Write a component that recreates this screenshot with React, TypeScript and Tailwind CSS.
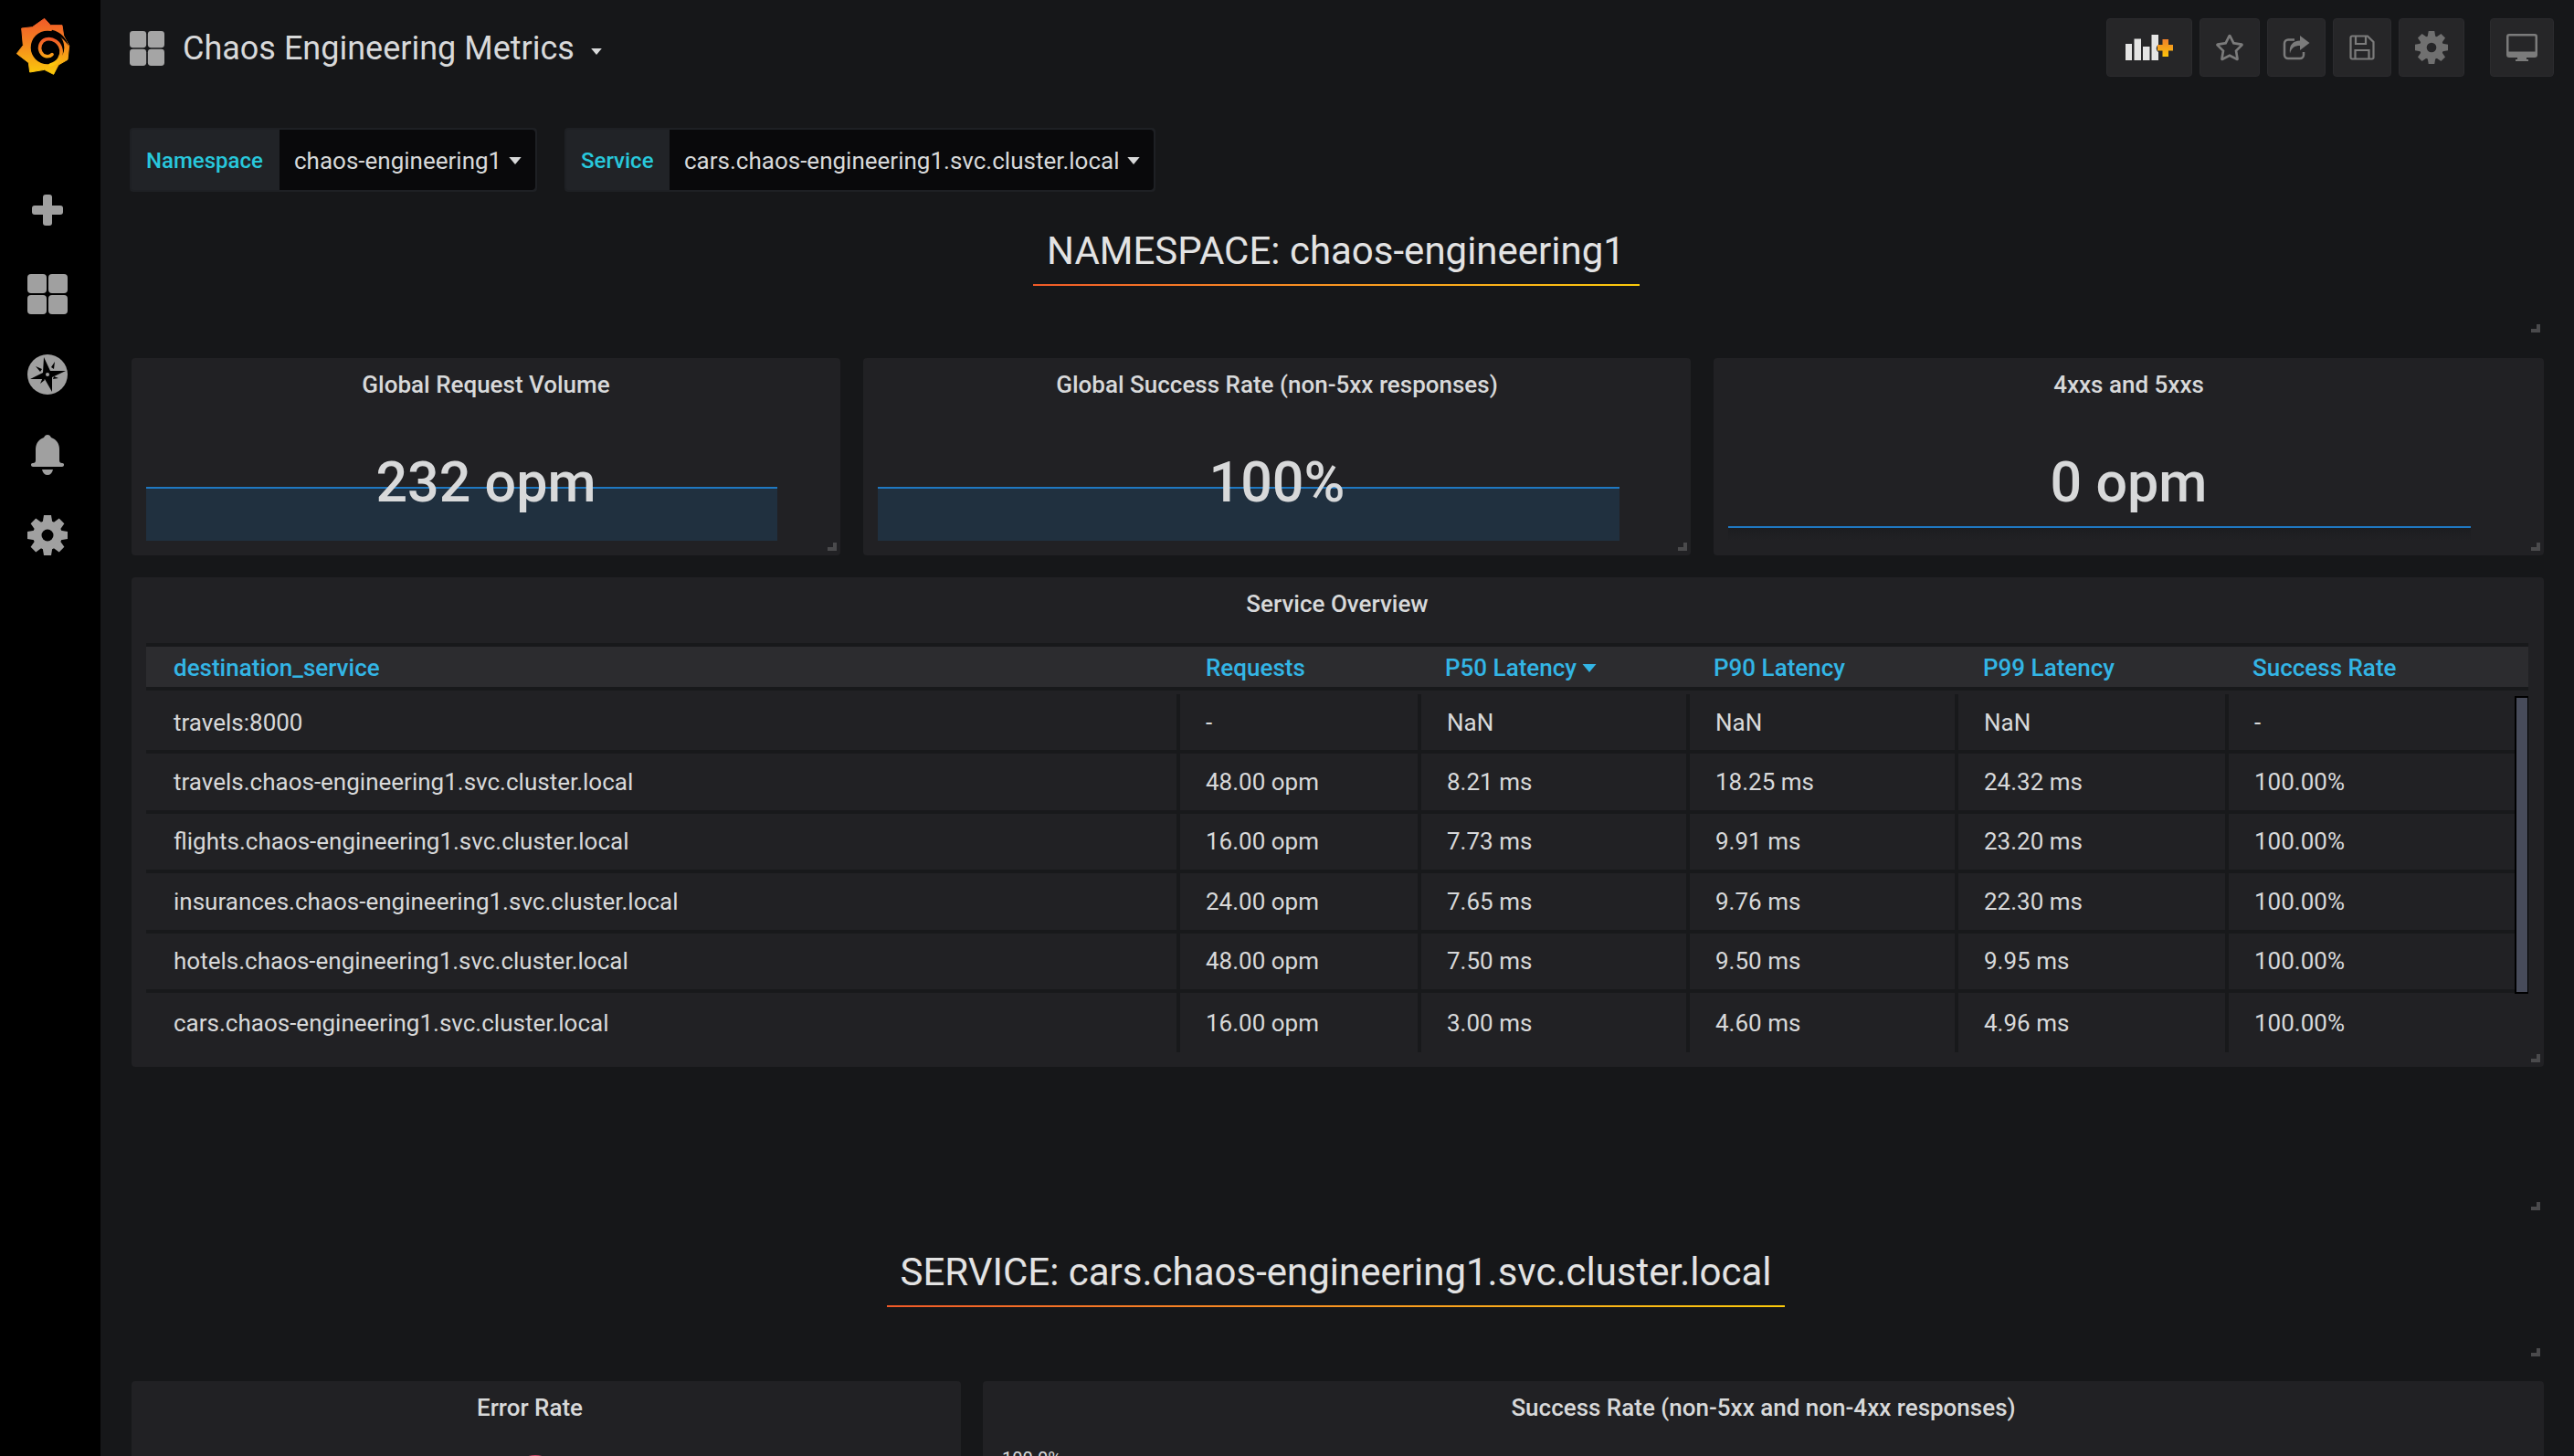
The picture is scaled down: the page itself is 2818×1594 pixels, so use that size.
import type { ReactNode } from 'react';
import { FaRegStar } from 'react-icons/fa';

const rows = [
  ['travels:8000', '-', 'NaN', 'NaN', 'NaN', '-'],
  ['travels.chaos-engineering1.svc.cluster.local', '48.00 opm', '8.21 ms', '18.25 ms', '24.32 ms', '100.00%'],
  ['flights.chaos-engineering1.svc.cluster.local', '16.00 opm', '7.73 ms', '9.91 ms', '23.20 ms', '100.00%'],
  ['insurances.chaos-engineering1.svc.cluster.local', '24.00 opm', '7.65 ms', '9.76 ms', '22.30 ms', '100.00%'],
  ['hotels.chaos-engineering1.svc.cluster.local', '48.00 opm', '7.50 ms', '9.50 ms', '9.95 ms', '100.00%'],
  ['cars.chaos-engineering1.svc.cluster.local', '16.00 opm', '3.00 ms', '4.60 ms', '4.96 ms', '100.00%'],
];

const tableCols = 'grid grid-cols-[1128px_264px_294px_294px_296px_332px]';

const Caret = ({ className }: { className: string }) => (
  <svg viewBox="0 0 10 6" className={className}>
    <path d="M0 0h10L5 6z" fill="currentColor" />
  </svg>
);

const Tiles = ({ className }: { className: string }) => (
  <svg viewBox="0 0 44 44" className={className} fill="currentColor">
    <rect x="0" y="0" width="21" height="21" rx="4" />
    <rect x="23" y="0" width="21" height="21" rx="4" />
    <rect x="0" y="23" width="21" height="21" rx="4" />
    <rect x="23" y="23" width="21" height="21" rx="4" />
  </svg>
);

const Gear = ({ className, hole }: { className: string; hole: string }) => (
  <svg viewBox="0 0 44 44" className={className} fill="currentColor">
    <circle cx="22" cy="22" r="16" />
    {[0, 45, 90, 135, 180, 225, 270, 315].map((a) => (
      <path key={a} d="M18 0h8l1.500 9h-11z" transform={`rotate(${a} 22 22)`} />
    ))}
    <circle cx="22" cy="22" r="6.500" fill={hole} />
  </svg>
);

const Logo = () => (
  <svg viewBox="50 56 180 192" className="w-[60px] h-[64px]">
    <defs>
      <linearGradient id="grafana" x1="0" y1="0" x2="0" y2="1">
        <stop offset="0" stopColor="#f05a28" />
        <stop offset="0.35" stopColor="#f47a22" />
        <stop offset="1" stopColor="#fbca0a" />
      </linearGradient>
    </defs>
    <path
      d="M145 60 L165 82 L203 82 L208 116 L226 150 L221 195 L191 212 L175 243 L145 228 L97 236 L93 205 L54 175 L75 148 L70 92 L105 88 Z"
      fill="url(#grafana)"
      stroke="url(#grafana)"
      strokeWidth="3"
      strokeLinejoin="round"
    />
    <circle cx="155" cy="155" r="55" fill="#000" />
    <path d="M170 97 C198 104 218 124 224 150 C212 130 192 112 165 108z" fill="#000" />
    <path
      d="M165 212 C190 204 203 184 200 163 C196 138 172 122 150 128 C132 134 125 154 133 170 C141 186 160 188 170 178"
      fill="none"
      stroke="url(#grafana)"
      strokeWidth="11"
      strokeLinecap="round"
    />
  </svg>
);

const Compass = () => (
  <svg viewBox="0 0 44 44" className="w-[44px] h-[44px]">
    <circle cx="22" cy="22" r="22" fill="#a0a0a0" />
    <path d="M18 3 L25 18 L42 18 L27 25 L27 41 L19 27 L3 27 L17 20z" fill="#000" />
    <path d="M9 13l7 3-2 3zM30 8l-1 8-3-2zM34 26l-6 1 1-3zM14 32l3-7 2 3z" fill="#000" />
    <circle cx="22" cy="22" r="2" fill="#a0a0a0" />
  </svg>
);

const Bell = () => (
  <svg viewBox="0 0 36 44" className="w-[36px] h-[44px]" fill="#a0a0a0">
    <path d="M18 0c2 0 3 1 4 3 6 2 9 7 9 13v12c0 2 1 3 3 3 2 0 2 1 2 2s-1 2-2 2H2c-1 0-2-1-2-2s0-2 2-2c2 0 3-1 3-3V16C5 10 8 5 14 3c1-2 2-3 4-3z" />
    <path d="M12 38h12c-1 4-3 6-6 6s-5-2-6-6z" />
  </svg>
);

const NavIcon = ({ children }: { children: ReactNode }) => (
  <div className="h-[88px] w-full pr-[6px] flex items-center justify-center">{children}</div>
);

const Sidebar = () => (
  <aside className="w-[110px] shrink-0 bg-black flex flex-col">
    <div className="h-[186px] pt-[19px] pl-[17px]">
      <Logo />
    </div>
    <NavIcon>
      <svg viewBox="0 0 34 34" className="w-[34px] h-[34px]" fill="#a0a0a0">
        <rect x="12" y="0" width="10" height="34" rx="3" />
        <rect x="0" y="12" width="34" height="10" rx="3" />
      </svg>
    </NavIcon>
    <div className="h-[4px]" />
    <NavIcon>
      <Tiles className="w-[44px] h-[44px] text-[#a0a0a0]" />
    </NavIcon>
    <NavIcon>
      <Compass />
    </NavIcon>
    <NavIcon>
      <Bell />
    </NavIcon>
    <NavIcon>
      <Gear className="w-[44px] h-[44px] text-[#a0a0a0]" hole="#000" />
    </NavIcon>
  </aside>
);

const ToolButton = ({ w, children }: { w: string; children: ReactNode }) => (
  <button className={`${w} h-[64px] rounded-[4px] bg-[#262628] border border-[#2b2b2e] flex items-center justify-center text-[#7b7b7b]`}>
    {children}
  </button>
);

const Toolbar = () => (
  <div className="flex items-center gap-[8px]">
    <ToolButton w="w-[94px]">
      <svg viewBox="0 0 52 28" className="w-[52px] h-[28px]">
        <path d="M0 10h7v18H0zM9.500 4.500h7.500V28H9.500zM19 13h7.500v15H19zM28.500 0H36v11c-3 2-3 6 0 8v9h-7.500z" fill="#e4e4e4" />
        <path d="M35 11h5.500V5h6.500v6h5v6.500h-5V24h-6.500v-6.500H35z" fill="url(#plusfill)" />
        <defs>
          <linearGradient id="plusfill" x1="0" y1="0" x2="0" y2="1">
            <stop offset="0" stopColor="#f0802a" />
            <stop offset="1" stopColor="#fbc30a" />
          </linearGradient>
        </defs>
      </svg>
    </ToolButton>
    <ToolButton w="w-[66px]">
      <FaRegStar className="w-[32px] h-[30px]" />
    </ToolButton>
    <ToolButton w="w-[64px]">
      <svg viewBox="0 0 30 27" className="w-[30px] h-[27px]" fill="none">
        <path d="M13 4.500H6a4 4 0 0 0-4 4v12.500a4 4 0 0 0 4 4h13a4 4 0 0 0 4-4v-3" stroke="#7b7b7b" strokeWidth="2.500" />
        <path d="M19 0l10.500 8-10.500 8v-5c-6 0-9.500 2.500-11 8.500-1.500-9 3.500-14 11-14z" fill="#7b7b7b" />
      </svg>
    </ToolButton>
    <ToolButton w="w-[64px]">
      <svg viewBox="0 0 28 28" className="w-[28px] h-[28px]" fill="none" stroke="#7b7b7b" strokeWidth="2.200">
        <path d="M3 1.500h17l6.500 6.500v17a1.500 1.500 0 0 1-1.500 1.500H3A1.500 1.500 0 0 1 1.500 25V3A1.500 1.500 0 0 1 3 1.500z" />
        <path d="M7 2v8h11V2M6.500 26v-9h15v9" />
      </svg>
    </ToolButton>
    <ToolButton w="w-[72px]">
      <Gear className="w-[36px] h-[36px] text-[#707070]" hole="#262628" />
    </ToolButton>
    <div className="w-[12px]" />
    <ToolButton w="w-[70px]">
      <svg viewBox="0 0 34 30" className="w-[34px] h-[30px]" fill="#7b7b7b">
        <path d="M3 0h28a3 3 0 0 1 3 3v20a3 3 0 0 1-3 3H22v2h2v2H10v-2h2v-2H3a3 3 0 0 1-3-3V3a3 3 0 0 1 3-3zm0 2.500a.5.5 0 0 0-.5.500v16.500h29V3a.5.5 0 0 0-.5-.5z" />
      </svg>
    </ToolButton>
  </div>
);

const VariablePicker = ({ label, value, labelW, valueW }: { label: string; value: string; labelW: string; valueW: string }) => (
  <div className="flex h-[70px] rounded-[4px] bg-[#212327] border-2 border-[#1e2024]">
    <div className={`${labelW} flex items-center pl-[16px] pt-[2px] text-[24px] font-medium text-[#28c8dc]`}>{label}</div>
    <div className={`${valueW} flex items-center pl-[16px] pt-[2px] gap-[8px] rounded-r-[4px] bg-[#09090b] text-[26px] text-[#d8d9da]`}>
      <span className="whitespace-nowrap">{value}</span>
      <Caret className="w-[14px] h-[8px] text-[#d8d9da]" />
    </div>
  </div>
);

const ResizeHandle = ({ className }: { className: string }) => (
  <div className={`absolute w-[10px] h-[9px] border-r-[4px] border-b-[4px] border-[#4a4a4c] ${className}`} />
);

const RowTitle = ({ text, className, titleBox }: { text: string; className: string; titleBox: string }) => (
  <div className={`flex justify-center pr-[4px] ${className}`}>
    <div className={`${titleBox} flex flex-col items-center`}>
      <div className="text-[42px] leading-[52px] text-[#e3e3e3] whitespace-nowrap">{text}</div>
      <div className="mt-[10px] h-[2px] w-full bg-gradient-to-r from-[#f05a28] to-[#fbca0a]" />
    </div>
  </div>
);

const StatPanel = ({ title, value, area, lineW }: { title: string; value: string; area: boolean; lineW: string }) => (
  <section className="relative h-[216px] rounded-[4px] bg-[#212124] px-[16px] overflow-hidden">
    <h2 className="pt-[14px] text-center text-[26px] leading-[30px] font-medium text-[#d8d9da]">{title}</h2>
    <div className={`absolute left-[16px] ${lineW} ${area ? 'top-[141px] h-[59px] bg-[#20303f]' : 'top-[184px] h-[16px] bg-gradient-to-b from-[#1c1d20] to-[#212124]'} border-t-2 border-[#1f78c1]`} />
    <div className="relative mt-[54px] text-center text-[61px] leading-[76px] font-medium text-[#d8d9da]">{value}</div>
    <ResizeHandle className="right-[4px] bottom-[5px]" />
  </section>
);

const ServiceTable = () => (
  <section className="relative mt-[24px] h-[536px] rounded-[4px] bg-[#212124] pl-[16px] pr-[17px] overflow-hidden">
    <h2 className="h-[72px] pt-[14px] text-center text-[26px] leading-[30px] font-medium text-[#d8d9da]">Service Overview</h2>
    <div className={`${tableCols} h-[52px] pt-[2px] items-center border-y-4 border-[#18191b] bg-[#2c2c2f] text-[26px] font-medium text-[#33b5e5]`}>
      <div className="pl-[30px]">destination_service</div>
      <div className="pl-[32px]">Requests</div>
      <div className="pl-[30px] flex items-center gap-[6px]">
        P50 Latency
        <Caret className="w-[16px] h-[9px]" />
      </div>
      <div className="pl-[30px]">P90 Latency</div>
      <div className="pl-[31px]">P99 Latency</div>
      <div className="pl-[30px]">Success Rate</div>
    </div>
    <div className="pt-[4px]">
      {rows.map((row, i) => (
        <div key={row[0]} className={`${tableCols} h-[65.400px] ${i < rows.length - 1 ? 'border-b-4 border-[#18191b]' : ''} text-[26px] text-[#d8d9da]`}>
          {row.map((cell, j) => (
            <div key={j} className={`flex items-center pt-[1px] ${j === 0 ? 'pl-[30px]' : 'pl-[28px] border-l-4 border-[#18191b]'}`}>
              {cell}
            </div>
          ))}
        </div>
      ))}
    </div>
    <div className="absolute right-[17px] top-[130px] w-[15px] h-[326px] bg-black p-[2px] pr-[1px]">
      <div className="h-full bg-[#474b5a]" />
    </div>
    <ResizeHandle className="right-[4px] bottom-[5px]" />
  </section>
);

export default function App() {
  return (
    <div className="flex h-[1594px] overflow-hidden bg-[#161719] font-['Roboto',sans-serif]">
      <Sidebar />
      <main className="w-[2708px] pl-[34px] pr-[33px]">
        <header className="flex items-center justify-between pt-[20px] ml-[-2px]">
          <div className="flex items-center pt-[2px]">
            <Tiles className="w-[38px] h-[38px] text-[#a5a5a5]" />
            <h1 className="ml-[20px] text-[36px] text-[#d8d9da]">Chaos Engineering Metrics</h1>
            <Caret className="ml-[18px] mt-[6px] w-[12px] h-[7px] text-[#d8d9da]" />
          </div>
          <div className="mr-[-11px]">
            <Toolbar />
          </div>
        </header>

        <div className="mt-[56px] ml-[-2px] flex gap-[30px]">
          <VariablePicker label="Namespace" value="chaos-engineering1" labelW="w-[162px]" valueW="w-[280px]" />
          <VariablePicker label="Service" value="cars.chaos-engineering1.svc.cluster.local" labelW="w-[113px]" valueW="w-[530px]" />
        </div>

        <div className="relative">
          <RowTitle text="NAMESPACE: chaos-engineering1" className="pt-[39px]" titleBox="w-[664px]" />
          <ResizeHandle className="right-[4px] top-[145px]" />
        </div>

        <div className="mt-[79px] grid grid-cols-[776px_906px_909px] gap-x-[25px]">
          <StatPanel title="Global Request Volume" value="232 opm" area lineW="w-[691px]" />
          <StatPanel title="Global Success Rate (non-5xx responses)" value="100%" area lineW="w-[812px]" />
          <StatPanel title="4xxs and 5xxs" value="0 opm" area={false} lineW="w-[813px]" />
        </div>

        <ServiceTable />

        <div className="relative">
          <ResizeHandle className="right-[4px] top-[148px]" />
          <RowTitle text="SERVICE: cars.chaos-engineering1.svc.cluster.local" className="pt-[199px]" titleBox="w-[983px]" />
          <ResizeHandle className="right-[4px] top-[308px]" />
        </div>

        <div className="mt-[81px] grid grid-cols-[908px_1709px] gap-x-[24px]">
          <section className="relative h-[200px] rounded-[4px] bg-[#212124]">
            <h2 className="pt-[14px] pr-[36px] text-center text-[26px] leading-[30px] font-medium text-[#d8d9da]">Error Rate</h2>
            <div className="absolute left-[414px] top-[81px] w-[56px] h-[30px] rounded-t-[28px] bg-[#d44a6a]" />
          </section>
          <section className="relative h-[200px] rounded-[4px] bg-[#212124]">
            <h2 className="pt-[14px] text-center text-[26px] leading-[30px] font-medium text-[#d8d9da]">Success Rate (non-5xx and non-4xx responses)</h2>
            <div className="pl-[21px] pt-[26px] text-[20px] leading-[30px] text-[#d8d9da]">100.0%</div>
          </section>
        </div>
      </main>
    </div>
  );
}
